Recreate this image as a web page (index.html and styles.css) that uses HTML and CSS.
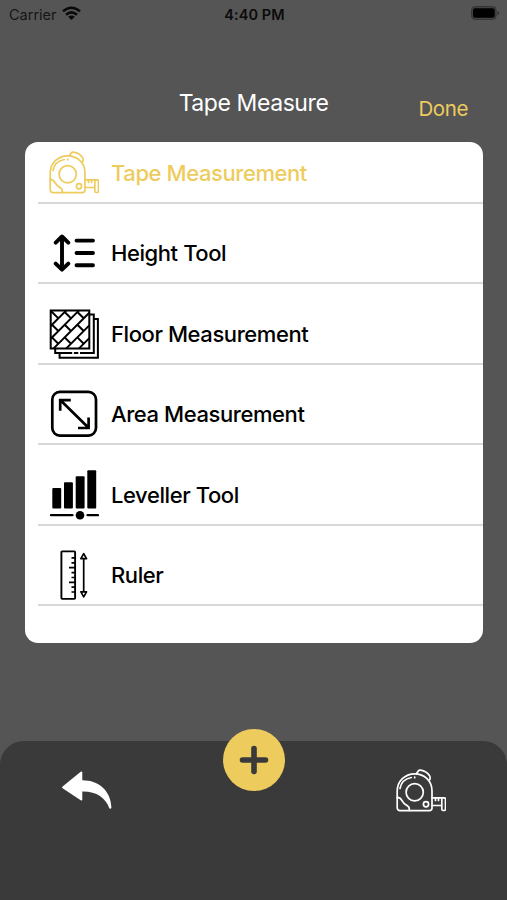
FILE: index.html
```html
<!DOCTYPE html>
<html lang="en">
<head>
<meta charset="utf-8">
<title>Tape Measure</title>
<link rel="stylesheet" href="styles.css">
</head>
<body>
<svg class="defs" aria-hidden="true">
  <symbol id="tape" viewBox="0 0 50 50">
    <g fill="none" stroke="currentColor" stroke-width="1.7" stroke-linecap="round" stroke-linejoin="round">
      <path d="M1.200 25.500C1.200 15 9 7.800 18.700 7.800S36 15 36 25v17a2.600 2.600 0 0 1-2.600 2.600H4a2.800 2.800 0 0 1-2.800-2.800z"/>
      <circle cx="18.700" cy="26.300" r="8.600"/>
      <circle cx="30" cy="38.300" r="2.600"/>
      <path d="M1.200 31.400c3 0 4 1.500 5 3.500 1.500 3.300 3.500 4 5.500 5 1.500.7 1.700 2.500 1.700 4.500M4 22.500C5.200 16.500 9.500 12.500 15.300 11.500M18.700 11.200v.5"/>
      <path d="M20.500 7.500 22.300 4.900Q23 4 24.500 4.200 31 5.200 33.800 10.200q.8 1.500 0 3.500"/>
      <path d="M36 31.800h12.200q1.300 0 1.300 1.300v10q0 1.400-1.300 1.400h-1.100q-1.300 0-1.300-1.400V31.800M36 39.500h9.800M39.500 32v2.500M42.500 32v2.500"/>
    </g>
  </symbol>
</svg>
<main class="screen">
  <header class="status">
    <div class="carrier"><span>Carrier</span>
      <svg width="19" height="15" viewBox="0 0 19 15"><g fill="none" stroke="#090909" stroke-width="2.500"><path d="M1 5.400Q9.500-2 18 5.400M4 8.700Q9.500 4 15 8.700"/></g><path d="M6.200 10.800Q9.500 8.300 12.800 10.800L9.500 14z" fill="#090909"/></svg>
    </div>
    <time class="clock">4:40 PM</time>
    <svg class="battery" width="29" height="14" viewBox="0 0 29 14"><rect x=".6" y=".6" width="24.500" height="12.800" rx="3.500" fill="#444" stroke="#333"/><rect x="2" y="2.300" width="21.700" height="9.400" rx="2" fill="#000"/><path d="M26.500 4.800q1.700.7 1.700 2.200t-1.700 2.200z" fill="#333"/></svg>
  </header>
  <div class="heading">
    <h1>Tape Measure</h1>
    <button class="done">Done</button>
  </div>
  <ul class="menu">
    <li class="item active"><svg class="icon"><use href="#tape"/></svg><span>Tape Measurement</span></li>
    <li class="item">
      <svg class="icon" viewBox="0 0 50 50"><g fill="none" stroke="#000" stroke-width="3.900" stroke-linecap="round" stroke-linejoin="round"><path d="M13 9v32M6.700 14.600 13 8.500l6.300 6.100M6.700 35.600 13 41.700l6.300-6.100M27.500 12.600H44M27.500 25H44M27.500 37.300H44"/></g></svg>
      <span>Height Tool</span></li>
    <li class="item">
      <svg class="icon" viewBox="0 0 50 50"><g fill="none" stroke="#000" stroke-width="2"><path d="M1.700 1.400h38.600v38.200H1.700zM41 5.600h3.800v38.500H6.200V40M45 10h3.900v38.700H10.600V44.500"/><path d="M1.700 17 17.300 1.400M1.700 29.700 30 1.400M4.400 39.600 40.300 3.700M17.100 39.600 40.300 16.400M29.800 39.600 40.300 29.100M1.700 1.700l7.700 7.700M15.700 3 22 9.400M3 15.700 9.400 22M15.700 15.700 22 22M28.400 3l6.300 6.300M3 28.400l6.300 6.300M28.400 15.700 34.700 22M15.700 28.400 22 34.700M28.400 28.400l6.300 6.300"/></g><path d="M23.200 44.100h1.700M29.300 44.100H31" stroke="#fff" stroke-width="2.400"/></svg>
      <span>Floor Measurement</span></li>
    <li class="item">
      <svg class="icon" viewBox="0 0 50 50"><g fill="none" stroke="#000" stroke-width="2.700"><rect x="3.300" y="2.900" width="43.700" height="43.700" rx="7.500"/><path d="m11.500 11.300 28 27.500M21.800 11.200H11.200v10.500M29 39h10.600V28.500"/></g></svg>
      <span>Area Measurement</span></li>
    <li class="item">
      <svg class="icon" viewBox="0 0 50 50"><rect x="3.300" y="17.900" width="8.900" height="20.500" rx="1"/><rect x="15" y="12.200" width="8.900" height="26.200" rx="1"/><rect x="26.700" y="6.200" width="8.900" height="32.200" rx="1"/><rect x="38.300" y=".2" width="8.900" height="38.200" rx="1"/><circle cx="31" cy="45.200" r="4.300"/><path d="M2 45.200h21.500M38.500 45.200H49" stroke="#000" stroke-width="2.300" stroke-linecap="round"/></svg>
      <span>Leveller Tool</span></li>
    <li class="item">
      <svg class="icon" viewBox="0 0 50 50"><g fill="none" stroke="#000" stroke-width="1.900" stroke-linejoin="round"><rect x="12.400" y="1.400" width="13.700" height="47.500" rx=".8"/><path d="M22.500 7.900H26M22.500 12.800H26M20 17.600h6M22.500 22.600H26M22.500 27.500H26M20 32.300h6M22.500 37.200H26M22.500 42H26" stroke-width="1.700"/><path d="M34.700 8.500v33.500M34.700 3.700l-2.800 5h5.600zM34.700 46.800l-2.800-5h5.600z" stroke-width="1.700"/></g></svg>
      <span>Ruler</span></li>
  </ul>
  <footer class="toolbar">
    <svg class="back" viewBox="0 0 50 40"><path d="M.6 15.600 18.700.8q1.600-1 1.600.8v7.600C37 9.200 49 20 49.400 36.500q-.6 2.400-2.200.4C43.500 27 34.500 20.300 20.300 20.600v7.800q0 1.700-1.600.8L.6 17.200q-1-.8 0-1.600z" fill="#fff"/></svg>
    <button class="add" aria-label="Add"><svg width="30" height="30" viewBox="0 0 30 30"><path d="M15 3.500v23M3.500 15h23" stroke="#3a3a3a" stroke-width="5.600" stroke-linecap="round"/></svg></button>
    <svg class="tool"><use href="#tape"/></svg>
  </footer>
</main>
</body>
</html>
```
FILE: styles.css
```css
* { box-sizing: border-box; }
body { margin: 0; background: #555; font-family: Inter, "Liberation Sans", sans-serif; }
.defs { position: absolute; width: 0; height: 0; }
.screen { width: 507px; height: 900px; display: flex; flex-direction: column; background: #555; overflow: hidden; }
.status { height: 28px; padding: 0 7px 0 9px; display: grid; grid-template-columns: 1fr auto 1fr; align-items: center; color: #161616; font-size: 14.500px; }
.carrier { display: flex; align-items: center; gap: 5px; }
.carrier svg { margin-top: -2px; }
.clock { font-weight: 600; color: #0b0b0b; letter-spacing: .1px; }
.battery { justify-self: end; margin-top: -2px; }
.heading { height: 114px; display: grid; grid-template-columns: 1fr auto 1fr; align-items: start; }
h1 { grid-column: 2; margin: 60px 0 0; font-size: 23px; line-height: 30px; font-weight: 400; letter-spacing: -.42px; color: #fff; }
.done { justify-self: end; margin: 66px 39px 0 0; padding: 0; border: 0; background: none; color: #eecb5d; font: inherit; font-size: 20.500px; line-height: 30px; letter-spacing: -.4px; }
.menu { list-style: none; margin: 0 24.500px 0 25px; padding: 0 0 0 13px; height: 501px; border-radius: 13px; background: #fff; overflow: hidden; }
.item { height: 80.600px; padding: 0 0 4px 11px; display: flex; align-items: flex-end; gap: 12px; border-bottom: 2px solid #d8d8d8; font-size: 22px; line-height: 50px; font-weight: 500; letter-spacing: -.42px; color: #000; }
.item:first-child { height: 61.500px; }
.item.active { color: #eecb5d; }
.icon { width: 50px; height: 50px; flex: none; }
.toolbar { margin-top: 98px; height: 159px; padding: 0 61px 0 62px; display: flex; justify-content: space-between; align-items: flex-start; background: #3a3a3a; border-radius: 24px 24px 0 0; }
.back { width: 50px; height: 40px; margin-top: 30px; }
.add { width: 62px; height: 62px; margin-top: -12px; padding: 0; display: grid; place-items: center; border: 0; border-radius: 50%; background: #eecb5d; }
.tool { width: 50px; height: 50px; margin-top: 25px; color: #fff; }
```
